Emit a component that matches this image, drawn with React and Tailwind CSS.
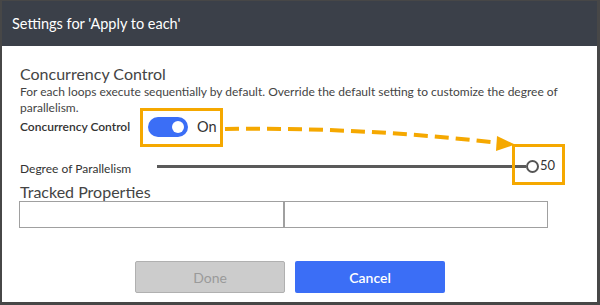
import React from 'react';

const ORANGE = '#f5a800';

const Toggle = ({ on }) => (
  <div className={`flex items-center w-[40px] h-[20px] rounded-full px-[4px] ${on ? 'bg-[#3b6ef6] justify-end' : 'bg-gray-300 justify-start'}`}>
    <div className="w-[12px] h-[12px] rounded-full bg-white" />
  </div>
);

const Arrow = () => (
  <svg className="absolute inset-0 pointer-events-none" width="600" height="305" viewBox="0 0 600 305">
    <path d="M223 128 Q 360 126 497 142" fill="none" stroke={ORANGE} strokeWidth="4" strokeDasharray="14 7" />
    <polygon points="495,135 513,143.5 494,150" fill={ORANGE} />
  </svg>
);

export default function App() {
  return (
    <div className="relative w-[600px] h-[305px] bg-white border-l-2 border-r-[3px] border-b-[3px] border-t border-[#474747] font-['Lato','Open_Sans',sans-serif] text-[#333]">
      <div className="h-[45px] bg-[#3b4049] flex items-center pl-[10px] text-white text-[14.5px]">
        Settings for 'Apply to each'
      </div>

      <div className="pl-[18px]">
        <h2 className="mt-[18px] text-[16px] leading-[20px] text-[#444]">Concurrency Control</h2>
        <p className="w-[560px] text-[12px] leading-[16px] text-[#444]">
          For each loops execute sequentially by default. Override the default setting to customize the degree of parallelism.
        </p>

        <div className="flex items-center h-[22px]">
          <span className="w-[120px] text-[12px] font-semibold text-[#333]">Concurrency Control</span>
          <div className="flex items-center h-[39px] w-[83px] border-[3px] border-[#f5a800] pl-[5px] gap-[9px]">
            <Toggle on />
            <span className="text-[14.5px] text-[#333]">On</span>
          </div>
        </div>

        <div className="relative flex items-center h-[20px] mt-[18px]">
          <span className="w-[137px] pt-[6px] text-[12px] text-[#333]">Degree of Parallelism</span>
          <div className="w-[369px] h-[3px] bg-[#5a5a5a]" />
          <div className="w-[13px] h-[13px] rounded-full border-2 border-[#555] bg-white" />
          <span className="ml-[1px] text-[13px] text-[#333]">50</span>
          <div className="absolute left-[492px] top-[-12px] w-[53px] h-[41px] border-[3px] border-[#f5a800]" />
        </div>

        <h2 className="mt-[7px] text-[16px] leading-[18px] text-[#444]">Tracked Properties</h2>
        <div className="flex w-[529px] ml-[-1px]">
          <div className="w-[265px] h-[27px] border border-[#a0a0a0]" />
          <div className="w-[264px] h-[27px] border border-[#a0a0a0]" />
        </div>

        <div className="flex gap-[10px] mt-[33px] ml-[115px]">
          <button className="w-[150px] h-[32px] rounded-[2px] bg-[#cccccc] border border-[#b0b0b0] text-[14px] text-[#9a9a9a]" disabled>
            Done
          </button>
          <button className="w-[150px] h-[32px] rounded-[2px] bg-[#3b6ef6] text-[14px] font-semibold text-white">
            Cancel
          </button>
        </div>
      </div>

      <Arrow />
    </div>
  );
}
